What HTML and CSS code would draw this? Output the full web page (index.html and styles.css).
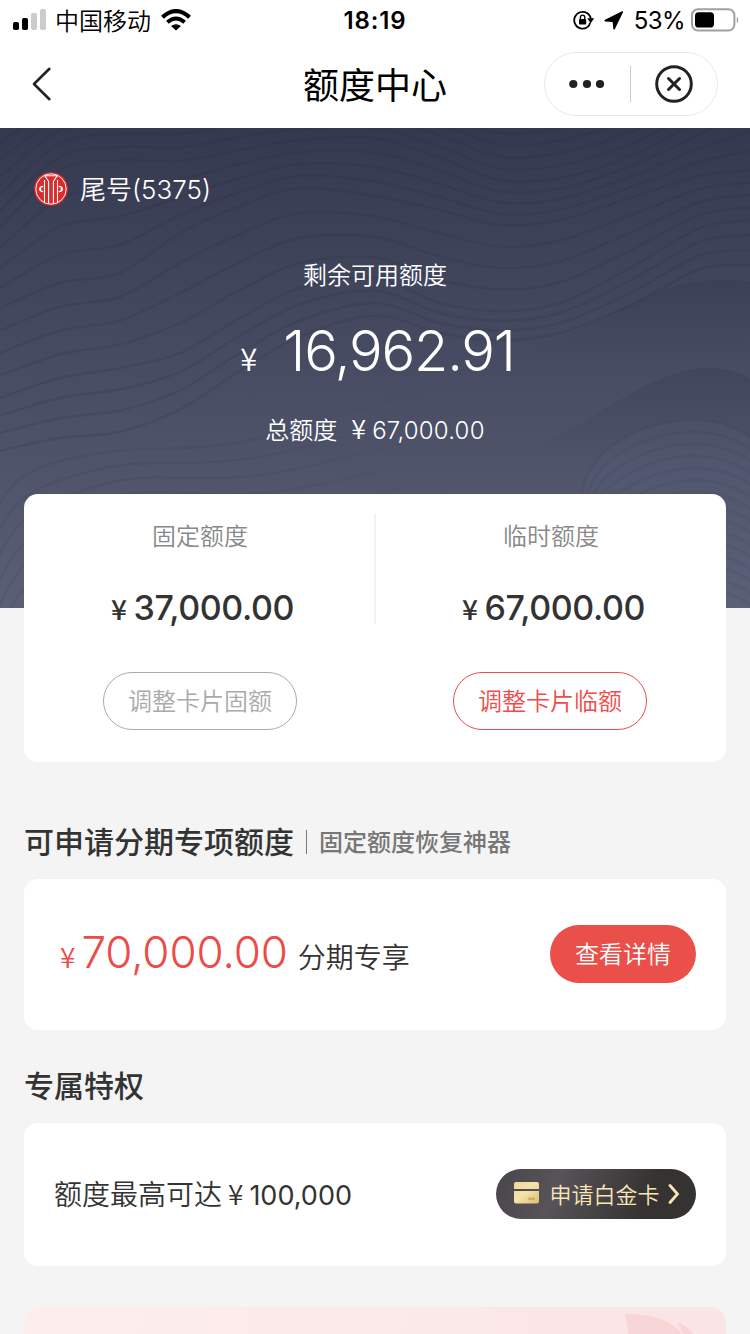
FILE: index.html
```html
<!DOCTYPE html>
<html lang="zh-CN">
<head>
<meta charset="utf-8">
<title>额度中心</title>
<link rel="stylesheet" href="styles.css">
</head>
<body>
<div class="screen">
  <header class="top">
    <div class="status">
      <div class="status-left">
        <svg class="signal" width="34" height="22" viewBox="0 0 34 22"><rect x="0" y="13" width="6" height="8" rx="1.8"/><rect x="9" y="9" width="6" height="12" rx="1.8"/><rect x="18" y="4" width="6" height="17" rx="1.8" fill="#ccc"/><rect x="27" y="0" width="6" height="21" rx="1.8" fill="#ccc"/></svg>
        <span class="carrier">中国移动</span>
        <svg class="wifi" width="30" height="22" viewBox="0 0 30 22" fill="none" stroke="#000"><path d="M1.5 8.2Q15 -3.9 28.5 8.2" stroke-width="4.2"/><path d="M6.4 13.2Q15 5.8 23.6 13.2" stroke-width="4"/><path d="M10 17.1Q15 13.2 20 17.1L15 21.6Z" fill="#000" stroke="none"/></svg>
      </div>
      <span class="clock">18:19</span>
      <div class="status-right">
        <svg width="22" height="20" viewBox="0 0 22 20"><path d="M14.2 17.3A8.4 8.4 0 1 1 17.9 8.8" fill="none" stroke="#000" stroke-width="1.8"/><path d="M17.2 12.6A8.4 8.4 0 0 1 14.2 17.3" fill="none" stroke="#000" stroke-width="1.8"/><path d="M14.2 8.2H21.2L17.7 13.2Z"/><rect x="6" y="9" width="7.2" height="5.6" rx=".8"/><path d="M7.4 9V7.3a2.2 2.2 0 0 1 4.4 0V9" fill="none" stroke="#000" stroke-width="1.4"/></svg>
        <svg class="arrow" width="20" height="19" viewBox="0 0 20 19"><path d="M18 .3 1 8.8Q-.2 9.8 1.2 10.4L8.6 11 9.3 17.7Q9.9 19.4 10.9 17.9L19 1.3Q19.2 0 18 .3Z"/></svg>
        <span class="percent">53%</span>
        <svg class="battery" width="48" height="24" viewBox="0 0 48 24"><rect x="1" y="1.2" width="42.4" height="21.4" rx="6" fill="none" stroke="#a0a0a0" stroke-width="2"/><rect x="4" y="4.2" width="19" height="15.4" rx="3.6"/><path d="M45.8 8.5Q49 12 45.8 15.5Z" fill="#a0a0a0"/></svg>
      </div>
    </div>
    <nav class="nav">
      <svg class="back" width="20" height="36" viewBox="0 0 20 36"><path d="M17.4 2.8 2 18 17.4 33.2" fill="none" stroke="#222" stroke-width="2.6" stroke-linecap="round" stroke-linejoin="round"/></svg>
      <h1 class="title">额度中心</h1>
      <div class="capsule">
        <svg width="36" height="10" viewBox="0 0 36 10" fill="#222"><circle cx="4.3" cy="5" r="4.1"/><circle cx="18" cy="5" r="4.1"/><circle cx="31" cy="5" r="4.1"/></svg>
        <i class="capsule-line"></i>
        <svg width="38" height="38" viewBox="0 0 38 38" fill="none" stroke="#222" stroke-width="3"><circle cx="19" cy="19" r="17.3"/><path d="M13.5 13.5 24.5 24.5M24.5 13.5 13.5 24.5" stroke-linecap="round"/></svg>
      </div>
    </nav>
  </header>

  <section class="hero">
    <svg class="waves" width="750" height="480" viewBox="0 0 750 480">
      <defs>
        <linearGradient id="ridge" x1="0" y1="0" x2="0" y2="1"><stop offset="0" stop-color="#2b2f43" stop-opacity=".22"/><stop offset=".75" stop-color="#2b2f43" stop-opacity="0"/></linearGradient>
        <linearGradient id="fade" x1="0" y1="0" x2="500" y2="0" gradientUnits="userSpaceOnUse"><stop offset="0" stop-color="#23273b"/><stop offset=".5" stop-color="#23273b"/><stop offset=".95" stop-color="#23273b" stop-opacity="0"/></linearGradient>
      </defs>
      <g id="contours" class="contours"></g>
      <g id="foothill" class="foothill"></g>
      <path d="M490 226C590 216 640 152 715 152Q735 151 750 154V260H490Z" fill="url(#ridge)"/>
      <path d="M480 336C580 316 635 242 708 240Q732 240 750 250V366H480Z" fill="url(#ridge)"/>
      <path d="M582 375C580 330 630 294 690 292Q725 291 752 310V500H582Z" fill="#646a82" fill-opacity=".13"/>
      <g id="hill" class="hill"></g>
    </svg>
    <div class="account">
      <svg class="bank" width="34" height="34" viewBox="0 0 34 34"><circle cx="17" cy="17" r="16.8" fill="#d92c2b"/><g fill="none" stroke="#fff"><circle cx="17" cy="17" r="15.2" stroke-width=".9"/><path d="M10 3.8H24M11 4 14.6 9.5V31.5M23 4 19.4 9.5V31.5M10.5 8V30.5M23.5 8V30.5" stroke-width="1.1"/></g><path d="M9.2 13.8V15.3H7.3V18.7H9.2V20.2Q5 20 5 17T9.2 13.8ZM24.8 13.8V15.3H26.7V18.7H24.8V20.2Q29 20 29 17T24.8 13.8Z" fill="#fff"/></svg>
      <span class="account-name">尾号<span class="account-digits">(5375)</span></span>
    </div>
    <div class="remain-label">剩余可用额度</div>
    <div class="remain"><span class="remain-yen">¥</span><span class="remain-num">16,962.91</span></div>
    <div class="total"><span class="total-label">总额度</span><span class="total-yen">¥</span><span class="total-num">67,000.00</span></div>
  </section>

  <main class="content">
    <section class="card limits">
      <div class="limit">
        <div class="limit-label">固定额度</div>
        <div class="limit-value"><span class="limit-yen">¥</span><span>37,000.00</span></div>
        <button class="pill pill-grey">调整卡片固额</button>
      </div>
      <i class="limits-line"></i>
      <div class="limit">
        <div class="limit-label">临时额度</div>
        <div class="limit-value"><span class="limit-yen">¥</span><span>67,000.00</span></div>
        <button class="pill pill-red">调整卡片临额</button>
      </div>
    </section>

    <div class="heading heading-first"><h2 class="heading-text">可申请分期专项额度</h2><i class="heading-line"></i><span class="heading-sub">固定额度恢复神器</span></div>
    <section class="card installment">
      <div class="offer"><span class="offer-yen">¥</span><span class="offer-num">70,000.00</span><span class="offer-text">分期专享</span></div>
      <button class="detail">查看详情</button>
    </section>

    <div class="heading heading-second"><h2 class="heading-text">专属特权</h2></div>
    <section class="card privilege">
      <div class="reach"><span>额度最高可达</span><span class="reach-yen">¥</span><span class="reach-num">100,000</span></div>
      <button class="platinum">
        <svg class="platinum-card" width="26" height="22" viewBox="0 0 26 22"><defs><linearGradient id="gold" x1="0" y1="0" x2="1" y2="1"><stop offset="0" stop-color="#f0d890"/><stop offset=".45" stop-color="#f5e3ad"/><stop offset="1" stop-color="#dfbd6b"/></linearGradient></defs><path d="M0 7V2Q0 0 2 0H23Q25 0 25 2V7ZM0 9H25V19.5Q25 21.5 23 21.5H2Q0 21.5 0 19.5Z" fill="url(#gold)"/><rect x="14" y="15.5" width="7" height="2.5" rx="1" fill="#b99b50" fill-opacity=".6"/></svg>
        <span class="platinum-text">申请白金卡</span>
        <svg width="12" height="20" viewBox="0 0 12 20"><path d="M2 1.5 9.5 10 2 18.5" fill="none" stroke="#f9e5b5" stroke-width="2.8" stroke-linecap="round"/></svg>
      </button>
    </section>

    <section class="promo">
      <svg width="120" height="27" viewBox="0 0 120 27"><path d="M18 7Q60 6 76 27H22Q22 15 18 7Z" fill="#f8d5d7"/><path d="M72 15Q82 19 87 27H78Q73 22 72 15Z" fill="#f8d5d7"/></svg>
    </section>
  </main>
</div>
<script src="waves.js"></script>
</body>
</html>
```

FILE: styles.css
```css
* { box-sizing: border-box; }
body {
  margin: 0;
  background: #f4f4f4;
  color: #333;
  font-family: Inter, "Noto Sans CJK SC", sans-serif;
}
h1, h2 { margin: 0; font-weight: 400; }
svg { display: block; flex: none; }
button { padding: 0; border: 0; background: none; font-family: inherit; display: flex; align-items: center; justify-content: center; white-space: nowrap; }
.screen { width: 750px; height: 1334px; overflow: hidden; }

.top { height: 128px; background: #fff; color: #000; }
.status { height: 40px; display: grid; grid-template-columns: 1fr auto 1fr; align-items: center; }
.status-left { display: flex; align-items: center; padding-left: 13px; }
.signal { margin-top: -2px; }
.carrier { font-size: 24px; line-height: 36px; margin: 2px 0 0 8px; font-weight: 350; }
.wifi { margin-left: 10px; margin-top: -1px; }
.clock { font-size: 24px; font-weight: 600; letter-spacing: 0.9px; line-height: 40px; margin-top: 1px; }
.status-right { display: flex; align-items: center; justify-content: flex-end; padding-right: 11px; }
.status-right svg { margin-top: -1px; }
.status-right .arrow { margin-left: 9px; }
.percent { font-size: 24px; line-height: 40px; margin: 1px 0 0 10px; letter-spacing: -0.6px; }
.status-right .battery { margin-left: 6px; margin-top: -2px; }
.nav { height: 88px; display: grid; grid-template-columns: 1fr auto 1fr; align-items: center; padding: 0 32px; }
.title { font-size: 36px; line-height: 54px; margin-top: 3px; }
.capsule { justify-self: end; width: 174px; height: 64px; border: 1px solid #e9e9e9; border-radius: 32px; display: flex; align-items: center; padding-left: 24px; }
.capsule-line { width: 1px; height: 36px; background: #ccc; margin: 0 24px 0 25px; }

.hero { position: relative; height: 480px; background: linear-gradient(#343950, #5a5f76); color: #fff; display: flex; flex-direction: column; align-items: center; font-weight: 350; }
.waves { position: absolute; inset: 0; }
.contours { fill: none; stroke: #23273b; stroke-opacity: 0.15; stroke-width: 2.4px; }
.foothill { fill: none; stroke: url(#fade); stroke-opacity: 0.1; stroke-width: 2.4px; }
.hill { fill: none; stroke: #23273b; stroke-opacity: 0.08; stroke-width: 2.6px; }
.account, .remain-label, .remain, .total { position: relative; }
.account { align-self: flex-start; display: flex; align-items: center; height: 40px; margin: 41px 0 0 34px; }
.account-name { font-size: 26px; margin: 1px 0 0 12px; line-height: 40px; }
.account-digits { font-weight: 300; }
.remain-label { margin-top: 49px; font-size: 24px; line-height: 36px; }
.remain { display: flex; align-items: baseline; margin-top: 17px; line-height: 80px; padding-left: 5px; }
.remain-yen { font-family: "Noto Sans CJK SC", sans-serif; font-size: 31px; line-height: 1; margin-right: 26px; }
.remain-num { font-size: 56px; letter-spacing: -1.2px; font-weight: 300; }
.total { display: flex; align-items: baseline; margin-top: 22px; line-height: 36px; font-size: 24px; }
.total-yen { font-family: "Noto Sans CJK SC", sans-serif; font-size: 27px; line-height: 1; margin: 0 6px 0 14px; }
.total-num { letter-spacing: 0.2px; }

.content { position: relative; margin-top: -114px; padding: 0 24px; }
.card { background: #fff; border-radius: 14px; }
.limits { height: 268px; display: flex; }
.limit { flex: 0 0 352px; display: flex; flex-direction: column; align-items: center; padding-top: 25px; }
.limit:last-child { flex-basis: 350px; }
.limits-line { width: 2px; height: 110px; margin: 20px 0 0 -2px; background: #f2f2f2; }
.limit-label { font-size: 24px; line-height: 36px; color: #888; font-weight: 350; }
.limit-value { display: flex; align-items: baseline; margin-top: 29px; height: 48px; line-height: 48px; font-size: 34px; font-weight: 500; letter-spacing: -0.4px; padding-left: 5px; }
.limit-yen { font-family: "Noto Sans CJK SC", sans-serif; font-size: 28px; line-height: 1; margin-right: 7px; }
.pill { width: 194px; height: 58px; margin-top: 40px; padding-bottom: 3px; border-radius: 29px; border: 1px solid; font-size: 24px; font-weight: 350; }
.limit:last-child .pill { margin-right: 2px; }
.pill-grey { color: #aaa; }
.pill-red { color: #ef4b49; }

.heading { display: flex; align-items: center; height: 44px; }
.heading-first { margin-top: 58px; }
.heading-second { margin: 34px 0 15px; }
.heading-text { font-size: 30px; line-height: 44px; font-weight: 500; }
.heading-line { width: 1px; height: 24px; background: #777; margin: 0 12px; }
.heading-sub { font-size: 24px; line-height: 36px; margin-top: 2px; color: #777; font-weight: 500; }
.installment { height: 151px; margin-top: 15px; display: flex; align-items: center; justify-content: space-between; padding: 0 30px 2px 36px; }
.offer { display: flex; align-items: baseline; font-size: 28px; padding-bottom: 4px; }
.offer-yen { font-family: "Noto Sans CJK SC", sans-serif; color: #ea4c48; font-size: 28px; font-weight: 350; margin-right: 6px; }
.offer-num { color: #ea4c48; font-size: 44px; font-weight: 300; letter-spacing: -0.1px; margin-right: 10px; }
.offer-text { font-weight: 350; }
.detail { width: 146px; height: 58px; padding-bottom: 3px; border-radius: 29px; background: #ea4f4a; color: #fff; font-size: 24px; font-weight: 350; }
.privilege { height: 143px; display: flex; align-items: center; justify-content: space-between; padding: 0 30px 2px; }
.reach { display: flex; align-items: baseline; font-size: 28px; font-weight: 350; padding-bottom: 1px; }
.reach-yen { font-family: "Noto Sans CJK SC", sans-serif; margin: 0 6px; }
.reach-num { font-size: 27px; font-weight: 400; }
.platinum { width: 200px; height: 50px; border-radius: 25px; background: linear-gradient(110deg, #48454b, #575359 30%, #353331 75%); color: #f9e5b5; padding-left: 2px; }
.platinum-card { margin-top: -1px; }
.platinum-text { font-size: 22px; font-weight: 350; margin: -2px 8px 0 9px; }
.promo { height: 80px; margin-top: 41px; border-radius: 16px; background: linear-gradient(90deg, #fdeeed, #fae4e5); display: flex; justify-content: flex-end; }
```

FILE: waves.js
```js
const xs = [0, 60, 120, 180, 240, 300, 375, 440, 500, 560, 630, 700, 750];
const keys = [
  [-20, -50, -60, -62, -70, -65, -60, -50, -30, -38, -55, -80, -110],
  [100, 42, 32, 33, 22, 12, 10, 30, 52, 50, 28, -8, -35],
  [180, 155, 145, 105, 78, 60, 68, 82, 97, 92, 70, 48, 42],
  [270, 250, 240, 225, 190, 160, 150, 175, 183, 175, 140, 100, 92],
  [340, 330, 325, 300, 260, 225, 200, 215, 222, 215, 190, 155, 152]
];
const steps = [7, 4, 4, 4];

// Smooth path through the contour's sample points.
function contour(ys) {
  let d = `M${xs[0]} ${ys[0]}`;
  for (let i = 0; i < xs.length - 1; i++) {
    const a = Math.max(i - 1, 0), b = Math.min(i + 2, xs.length - 1);
    d += `C${xs[i] + (xs[i + 1] - xs[a]) / 6} ${ys[i] + (ys[i + 1] - ys[a]) / 6} ${xs[i + 1] - (xs[b] - xs[i]) / 6} ${ys[i + 1] - (ys[b] - ys[i]) / 6} ${xs[i + 1]} ${ys[i + 1]}`;
  }
  return d;
}
function add(parent, d) {
  const p = document.createElementNS("http://www.w3.org/2000/svg", "path");
  p.setAttribute("d", d);
  parent.appendChild(p);
}
const group = document.getElementById("contours");
steps.forEach((n, k) => {
  for (let s = 0; s < n; s++) {
    add(group, contour(keys[k].map((y, i) => y + (keys[k + 1][i] - y) * s / n)));
  }
});
// Left foothill, fading out toward the middle.
const foothill = document.getElementById("foothill");
for (let s = 0; s < 6; s++) {
  add(foothill, `M-4 ${385 + s * 26}C10 ${345 + s * 24} 40 ${335 + s * 20} 100 ${325 + s * 16}S200 ${330 + s * 16} 300 ${300 + s * 20}S420 ${260 + s * 24} 500 ${250 + s * 16}`);
}
// Rounded hill at the right edge.
const hill = document.getElementById("hill");
for (let s = 0; s < 15; s++) {
  const o = s * 12;
  add(hill, `M${582 + s * 5} 375C${580 + s * 5} ${330 + o} ${630 + s * 3} ${294 + o} 690 ${292 + o}Q725 ${291 + o} 752 ${310 + o}`);
}
```
